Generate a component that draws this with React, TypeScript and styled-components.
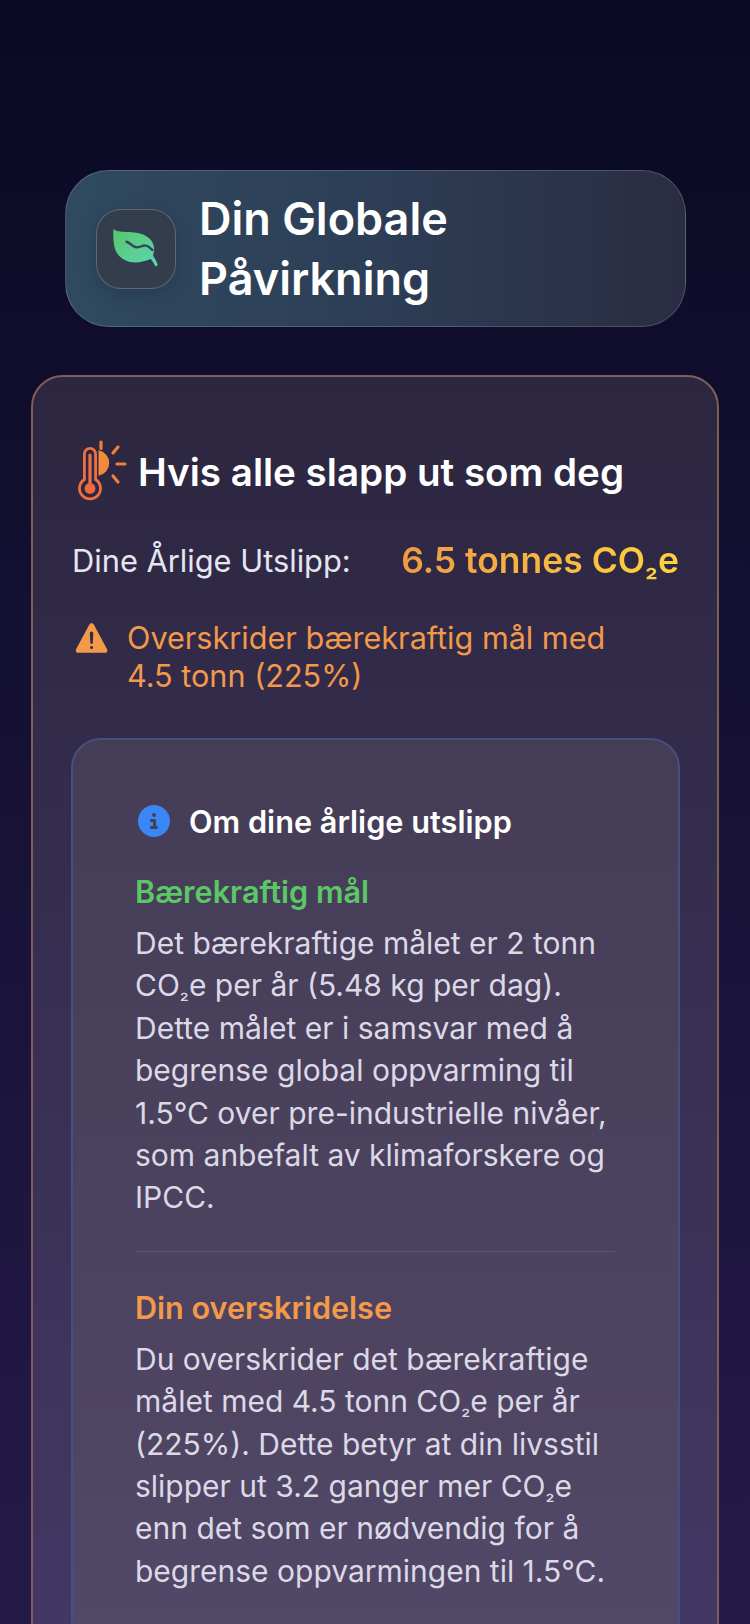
import React from "react";
import styled, { createGlobalStyle } from "styled-components";
import { IoWarning } from "react-icons/io5";
import { FaCircleInfo } from "react-icons/fa6";

const Global = createGlobalStyle`
  html, body { margin: 0; padding: 0; background: #0a0a24; }
  * { box-sizing: border-box; }
`;

const Page = styled.div`
  width: 750px;
  height: 1624px;
  overflow: hidden;
  padding: 170px 31px 0;
  font-family: Inter, "Noto Sans", sans-serif;
  background: linear-gradient(180deg, #0a0a24 0%, #241a48 100%);
  display: flex;
  flex-direction: column;
  align-items: stretch;
`;

const Hero = styled.header`
  margin: 0 33px 0 34px;
  height: 157px;
  flex: none;
  display: flex;
  align-items: center;
  gap: 23px;
  padding: 0 30px;
  border-radius: 44px;
  border: 1px solid rgba(255, 255, 255, 0.17);
  background: linear-gradient(90deg, #2f4a60 0%, #2d3e56 50%, #2a2c42 100%);
`;

const LeafBox = styled.div`
  width: 80px;
  height: 80px;
  flex: none;
  display: flex;
  align-items: center;
  justify-content: center;
  border-radius: 25px;
  border: 1px solid rgba(255, 255, 255, 0.22);
  background: #343d4d;
  box-shadow: 0 6px 18px rgba(20, 30, 50, 0.25);
`;

const HeroTitle = styled.h1`
  margin: 0;
  width: 320px;
  font-size: 45px;
  line-height: 60px;
  font-weight: 600;
  color: #fff;
`;

const Card = styled.section`
  margin-top: 48px;
  flex: none;
  height: 1400px;
  padding: 59px 38px 0 38px;
  border-radius: 32px;
  border: 2px solid #7e5f58;
  background: linear-gradient(180deg, #2c2640 0%, #463a68 100%);
`;

const CardHead = styled.div`
  display: flex;
  align-items: center;
  gap: 10px;
  margin-left: 5px;
  height: 72px;
`;

const CardTitle = styled.h2`
  margin: 0;
  font-size: 38.6px;
  font-weight: 600;
  color: #fff;
`;

const EmissionRow = styled.div`
  margin-top: 29px;
  display: flex;
  align-items: center;
  justify-content: space-between;
  height: 46px;
`;

const EmissionLabel = styled.span`
  margin-left: 1px;
  font-size: 30.8px;
  font-weight: 400;
  color: #e6e6f0;
`;

const EmissionValue = styled.span`
  font-size: 35.5px;
  font-weight: 600;
  background: linear-gradient(90deg, #f09a45 0%, #fdd33f 100%);
  -webkit-background-clip: text;
  background-clip: text;
  color: transparent;
`;

const Sub = styled.span<{ $scale: number }>`
  font-size: ${(p) => p.$scale}em;
  line-height: 1;
  vertical-align: -0.08em;
`;

const Warn = styled.div`
  margin-top: 36px;
  display: flex;
  gap: 15px;
  font-size: 30.6px;
  line-height: 38px;
  color: #f2994a;
  white-space: nowrap;
  svg { flex: none; margin: -1px 0 0 1px; }
`;

const Inner = styled.div`
  margin: 43px -1px 0 0;
  padding: 63px 63px 0 62px;
  height: 1000px;
  border-radius: 30px;
  border: 2px solid #44507f;
  background: linear-gradient(180deg, #453c56 0%, #534969 100%);
`;

const InnerHead = styled.div`
  display: flex;
  align-items: center;
  gap: 18px;
  margin-bottom: 33px;
  height: 36px;
  svg { color: #3b86f6; margin-left: 3px; }
`;

const InnerTitle = styled.h3`
  margin: 0 0 0 1px;
  font-size: 30.7px;
  font-weight: 600;
  color: #fff;
`;

const SectionTitle = styled.h4<{ $tone: string }>`
  margin: 0 0 10px;
  font-size: 30.6px;
  line-height: 40px;
  font-weight: 600;
  color: ${(p) => p.$tone};
`;

const Body = styled.p`
  margin: 0;
  width: 482px;
  font-size: 30px;
  line-height: 42.4px;
  font-weight: 400;
  color: #dcd9e6;
`;

const Rule = styled.hr`
  margin: 32px 0 36px;
  border: 0;
  height: 1px;
  background: rgba(255, 255, 255, 0.1);
  width: 480px;
`;

function ThermoSun() {
  return (
    <svg width="52" height="64" viewBox="0 0 52 64" fill="none">
      <path
        d="M8.4 39.5V14a5.6 5.6 0 0 1 11.2 0V39.5a10.5 10.5 0 1 1-11.2 0Z"
        stroke="#ee7040"
        strokeWidth="2.8"
      />
      <path d="M14 15v32" stroke="#ee7040" strokeWidth="3.2" strokeLinecap="round" />
      <circle cx="14" cy="48.4" r="5.4" fill="#ec6a3e" />
      <path d="M22.5 10.2a13 13 0 0 1 0 25.6Z" fill="#f28a3e" />
      <path
        d="M25 2v6.5M37 13l5-6M41 24h8M37 36l5 6"
        stroke="#ee7f3c"
        strokeWidth="3.2"
        strokeLinecap="round"
      />
    </svg>
  );
}

function LeafMark() {
  return (
    <svg width="46" height="40" viewBox="0 0 46 40" fill="none">
      <defs>
        <linearGradient id="leafGrad" x1="0" y1="0" x2="1" y2="1">
          <stop offset="0" stopColor="#55c76a" />
          <stop offset="1" stopColor="#5dd6b4" />
        </linearGradient>
      </defs>
      <path
        d="M0.5 0C4 3.5 12 2.5 19.3 3.3C30 4.2 40 8.5 41 18.5C41.4 22 40.4 25 40 26.7C41.5 29 43.5 32 44.6 35.2C44.9 36.6 43.4 37.8 42.4 37C40.7 34.6 39.5 32 37.7 30C33 32 26 34 19.3 33.3C10 32.2 3 26 1.2 17C0.2 11.5 0 5 0.5 0Z"
        fill="url(#leafGrad)"
      />
      <path
        d="M13.5 12.8C17 13.5 19 18 23.5 18.3C27.5 18.5 29.5 15.8 33 16.6C36 17.2 37.5 19.5 39.5 21"
        stroke="#39465a"
        strokeWidth="2.4"
        strokeLinecap="round"
      />
    </svg>
  );
}

export default function App() {
  return (
    <Page>
      <Global />
      <Hero>
        <LeafBox>
          <LeafMark />
        </LeafBox>
        <HeroTitle>Din Globale Påvirkning</HeroTitle>
      </Hero>
      <Card>
        <CardHead>
          <ThermoSun />
          <CardTitle>Hvis alle slapp ut som deg</CardTitle>
        </CardHead>
        <EmissionRow>
          <EmissionLabel>Dine Årlige Utslipp:</EmissionLabel>
          <EmissionValue>6.5 tonnes CO<Sub $scale={0.8}>₂</Sub>e</EmissionValue>
        </EmissionRow>
        <Warn>
          <IoWarning size={40} />
          <span>
            Overskrider bærekraftig mål med
            <br />
            4.5 tonn (225%)
          </span>
        </Warn>
        <Inner>
          <InnerHead>
            <FaCircleInfo size={32} />
            <InnerTitle>Om dine årlige utslipp</InnerTitle>
          </InnerHead>
          <SectionTitle $tone="#5cc765">Bærekraftig mål</SectionTitle>
          <Body>
            Det bærekraftige målet er 2 tonn CO<Sub $scale={0.68}>₂</Sub>e per år (5.48 kg per dag). Dette målet er i samsvar med å begrense global oppvarming til 1.5°C over pre-industrielle nivåer, som anbefalt av klimaforskere og IPCC.
          </Body>
          <Rule />
          <SectionTitle $tone="#f2994a">Din overskridelse</SectionTitle>
          <Body>
            Du overskrider det bærekraftige målet med 4.5 tonn CO<Sub $scale={0.68}>₂</Sub>e per år (225%). Dette betyr at din livsstil slipper ut 3.2 ganger mer CO<Sub $scale={0.68}>₂</Sub>e enn det som er nødvendig for å begrense oppvarmingen til 1.5°C.
          </Body>
        </Inner>
      </Card>
    </Page>
  );
}
